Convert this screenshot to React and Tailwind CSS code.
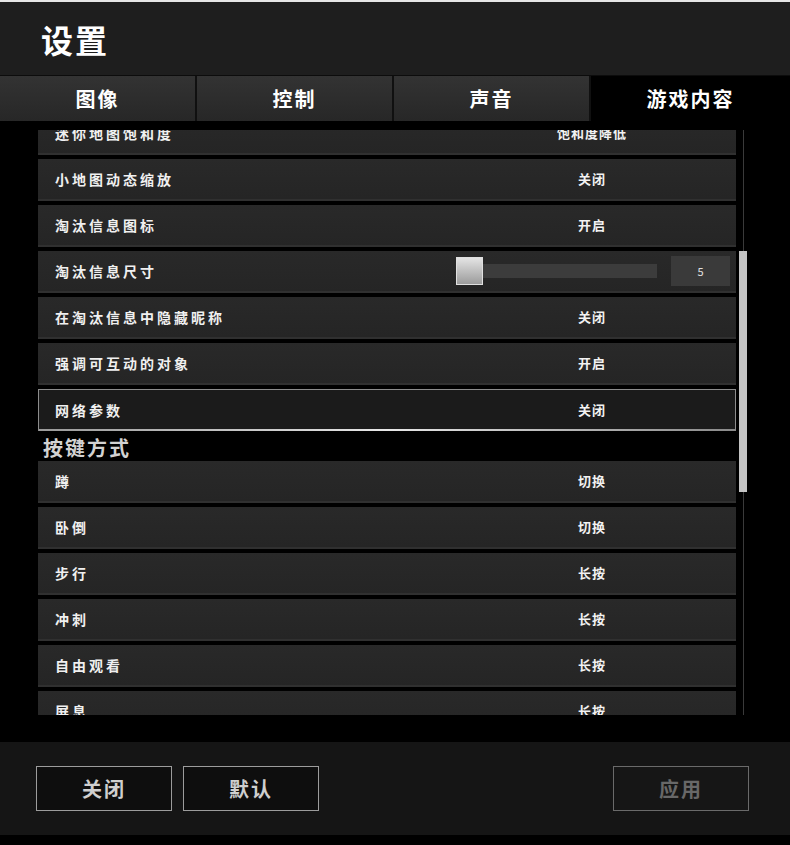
const topRows = [
  { label: "迷你地图饱和度", value: "饱和度降低" },
  { label: "小地图动态缩放", value: "关闭" },
  { label: "淘汰信息图标", value: "开启" },
  { label: "淘汰信息尺寸", slider: 5 },
  { label: "在淘汰信息中隐藏昵称", value: "关闭" },
  { label: "强调可互动的对象", value: "开启" },
  { label: "网络参数", value: "关闭", active: true },
];

const keyRows = [
  { label: "蹲", value: "切换" },
  { label: "卧倒", value: "切换" },
  { label: "步行", value: "长按" },
  { label: "冲刺", value: "长按" },
  { label: "自由观看", value: "长按" },
  { label: "屏息", value: "长按" },
];

const tabs = ["图像", "控制", "声音"];

const Row = ({ row }) => {
  if (row.active) {
    return (
      <div className="relative mb-1 flex h-[42px] items-center border border-[#8c8c8c] bg-[#1b1b1b] pl-[16px]">
        <span className="w-[477px] text-[14px] font-bold tracking-[3px] text-[#f0f0f0]">{row.label}</span>
        <span className="w-[120px] text-center text-[13px] font-bold tracking-[1px] text-[#f2f2f2]">{row.value}</span>
        <div className="absolute bottom-[-1px] left-0 right-0 h-[2px] bg-gradient-to-r from-[#9a9a9a] via-[#e8e8e8] to-[#8a8a8a]" />
      </div>
    );
  }

  return (
    <div className="mb-1 flex h-[42px] items-center border-b-2 border-[#303030] bg-gradient-to-b from-[#292929] to-[#252525] pl-[17px]">
      {row.slider !== undefined ? (
        <>
          <span className="flex-1 text-[14px] font-bold tracking-[3px] text-[#f0f0f0]">{row.label}</span>
          <div className="h-[28px] w-[27px] border border-[#e0e0e0] bg-gradient-to-b from-[#e4e4e4] to-[#9c9c9c]" />
          <div className="h-[14px] w-[174px] bg-[#3c3c3c]" />
          <div className="ml-[14px] mr-[6px] flex h-[30px] w-[59px] items-center justify-center bg-[#3a3a3a] text-[11px] text-[#e0e0e0]">
            {row.slider}
          </div>
        </>
      ) : (
        <>
          <span className="w-[477px] text-[14px] font-bold tracking-[3px] text-[#f0f0f0]">{row.label}</span>
          <span className="w-[120px] text-center text-[13px] font-bold tracking-[1px] text-[#f2f2f2]">{row.value}</span>
        </>
      )}
    </div>
  );
};

const FooterButton = ({ children, muted }) => (
  <button
    className={
      muted
        ? "h-[45px] w-[136px] border border-[#6a6a6a] bg-[#161616] text-[20px] font-bold tracking-[2px] text-[#686868]"
        : "h-[45px] w-[136px] border border-[#9c9c9c] bg-[#0e0e0e] text-[20px] font-bold tracking-[2px] text-[#cfcfcf]"
    }
  >
    {children}
  </button>
);

export default function App() {
  return (
    <div
      className="flex h-[845px] w-[790px] flex-col bg-black"
      style={{ fontFamily: '"Noto Sans CJK SC", "Noto Sans", sans-serif' }}
    >
      <div className="h-[2px] bg-[#e6e6e6]" />

      {/* Header */}
      <div className="flex h-[74px] items-center border-b border-[#0c0c0c] bg-[#1e1e1e] pl-[41px]">
        <h1 className="text-[32px] font-bold tracking-[2px] text-white">设置</h1>
      </div>

      {/* Tabs */}
      <div className="flex h-[45px] gap-[2px] bg-[#101010]">
        {tabs.map((t) => (
          <div
            key={t}
            className="flex w-[195px] items-center justify-center bg-gradient-to-b from-[#333333] to-[#272727] text-[20px] font-bold tracking-[2px] text-white"
          >
            {t}
          </div>
        ))}
        <div className="flex flex-1 items-center justify-center bg-black text-[20px] font-bold tracking-[2px] text-white">
          游戏内容
        </div>
      </div>

      {/* Settings list */}
      <div className="flex pt-[9px]">
        <div className="ml-[38px] h-[585px] w-[698px] overflow-hidden">
          <div className="mt-[-17px]">
            {topRows.map((r) => (
              <Row key={r.label} row={r} />
            ))}
            <div className="flex h-[26px] items-center pl-[5px] text-[20px] font-bold tracking-[2px] text-[#d2d2d2]">
              按键方式
            </div>
            {keyRows.map((r) => (
              <Row key={r.label} row={r} />
            ))}
          </div>
        </div>
        <div className="relative ml-[3px] h-[585px] w-[8px]">
          <div className="absolute bottom-0 left-[4px] top-0 w-px bg-[#3a3a3a]" />
          <div className="relative mt-[121px] h-[241px] w-[8px] bg-[#c4c4c4]" />
        </div>
      </div>

      {/* Footer */}
      <div className="mt-[27px] flex h-[93px] items-start bg-[#151515] pl-[36px] pr-[41px] pt-[24px]">
        <div className="flex gap-[11px]">
          <FooterButton>关闭</FooterButton>
          <FooterButton>默认</FooterButton>
        </div>
        <div className="ml-auto">
          <FooterButton muted>应用</FooterButton>
        </div>
      </div>
    </div>
  );
}
